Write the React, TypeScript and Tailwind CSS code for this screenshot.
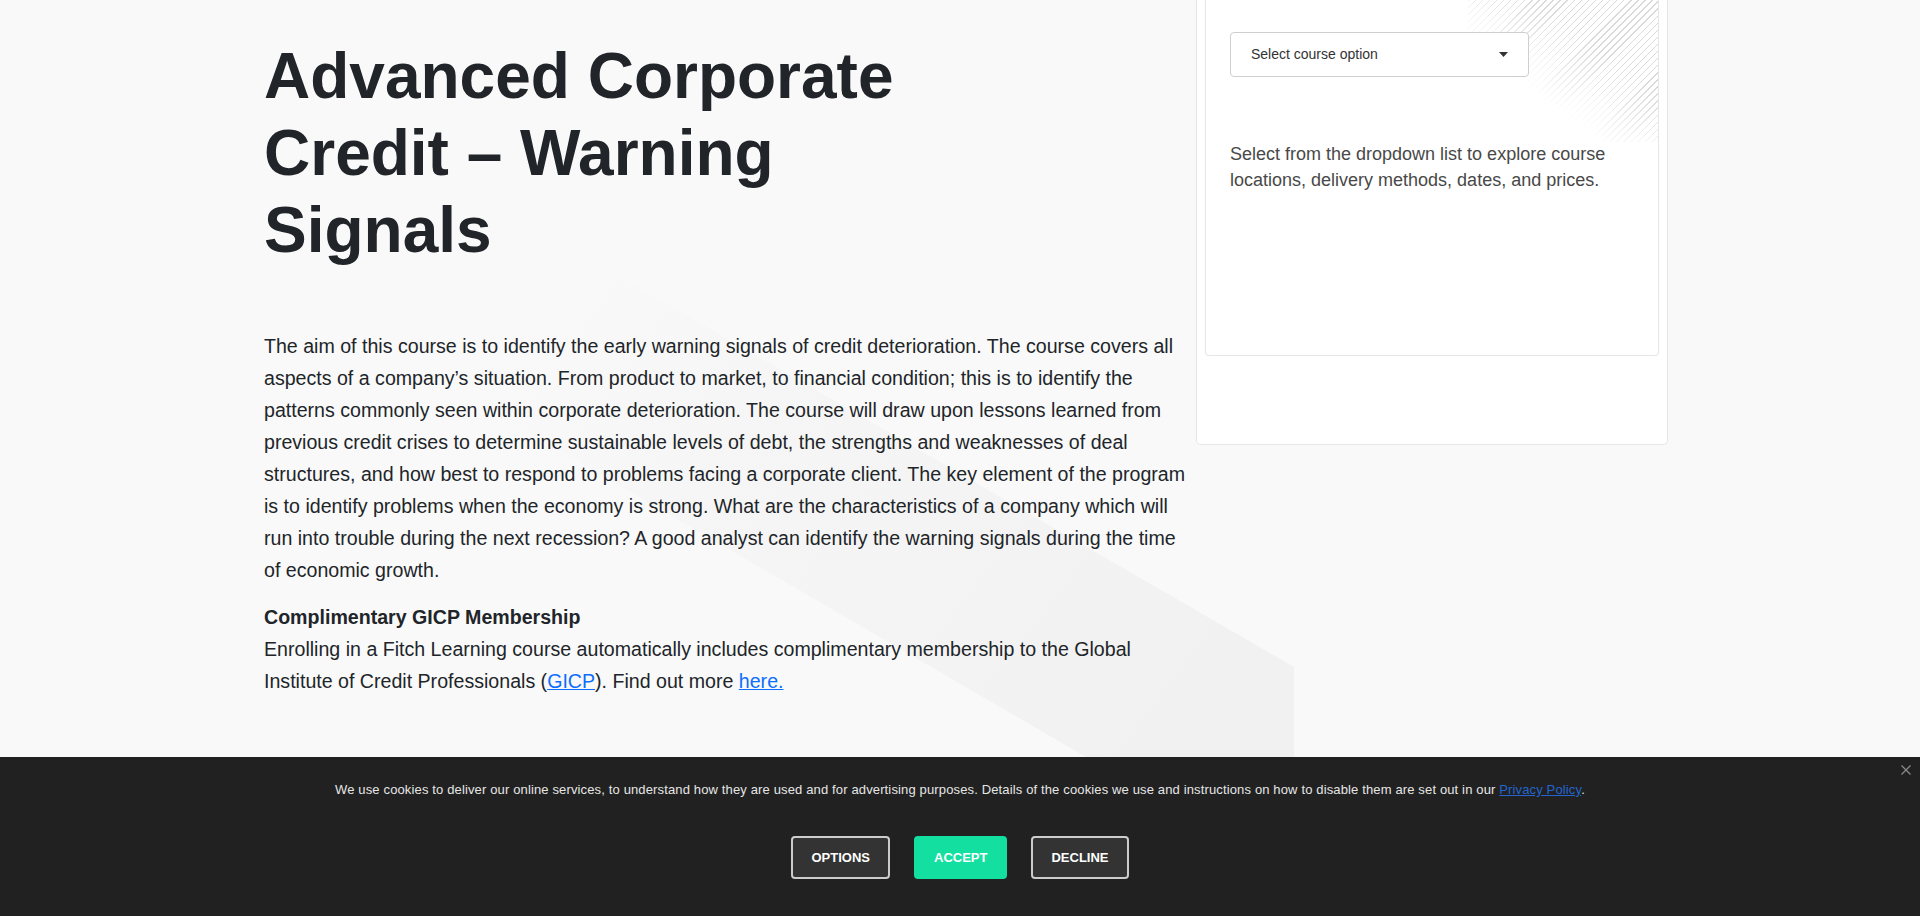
import React from "react";

function BackgroundShape() {
  return (
    <svg
      className="absolute left-0 top-0 pointer-events-none"
      width="1920"
      height="916"
      viewBox="0 0 1920 916"
      aria-hidden="true"
    >
      <defs>
        <linearGradient id="band" x1="0" y1="0" x2="1" y2="0.55">
          <stop offset="0" stopColor="#f9f9f9" stopOpacity="0" />
          <stop offset="0.35" stopColor="#f6f6f6" stopOpacity="1" />
          <stop offset="1" stopColor="#f1f1f1" stopOpacity="1" />
        </linearGradient>
      </defs>
      <polygon points="600,265 1294,667 1294,878 450,387" fill="url(#band)" />
    </svg>
  );
}

function CourseCard() {
  return (
    <div className="w-[472px] h-[445px] bg-white border border-t-0 border-[#e6e6e6] rounded-b-[5px] px-[8px] pb-[88px]">
      <div className="relative h-full bg-white border border-t-0 border-[#e6e6e6] rounded-b-[4px] pl-[24px] pt-[32px] overflow-hidden">
        <div className="absolute right-0 top-0 w-[190px] h-[142px] [background-image:repeating-linear-gradient(135deg,#d9d9d9_0_1px,transparent_1px_5px)] [mask-image:linear-gradient(to_bottom_left,#000_32%,transparent_66%)]" />
        <div className="relative flex items-center justify-between w-[299px] h-[45px] border border-[#cfcfcf] rounded-[4px] bg-white pl-[20px] pr-[20px] text-[14px] text-[#333]">
          <span>Select course option</span>
          <svg width="9" height="5" viewBox="0 0 9 5" aria-hidden="true">
            <polygon points="0,0 9,0 4.5,5" fill="#333" />
          </svg>
        </div>
        <p className="relative mt-[64px] w-[404px] text-[18px] leading-[26px] text-[#484848]">
          Select from the dropdown list to explore course locations, delivery methods, dates, and prices.
        </p>
      </div>
    </div>
  );
}

function CookieBanner() {
  return (
    <div className="fixed left-0 right-0 bottom-0 h-[159px] bg-[#212121] pt-[24px] font-['Liberation_Sans',Arial,sans-serif]">
      <button className="absolute right-[9px] top-[8px] w-[10px] h-[10px]" aria-label="Close">
        <svg width="10" height="10" viewBox="0 0 10 10">
          <line x1="0.5" y1="0.5" x2="9.5" y2="9.5" stroke="#8a8a8a" strokeWidth="1.2" />
          <line x1="9.5" y1="0.5" x2="0.5" y2="9.5" stroke="#8a8a8a" strokeWidth="1.2" />
        </svg>
      </button>
      <p className="text-center text-[13px] tracking-[0.14px] leading-[18px] text-[#e6e6e6]">
        We use cookies to deliver our online services, to understand how they are used and for advertising purposes. Details of the cookies we use and instructions on how to disable them are set out in our{" "}
        <a href="#" className="text-[#2366d1] underline">Privacy Policy</a>.
      </p>
      <div className="mt-[37px] flex justify-center gap-[24px]">
        <button className="h-[43px] px-[18px] border-2 border-[#cccccc] rounded-[4px] bg-[#333333] text-white text-[13px] font-bold">
          OPTIONS
        </button>
        <button className="h-[43px] px-[18px] border-2 border-[#13e0a0] rounded-[4px] bg-[#13e0a0] text-white text-[13px] font-bold">
          ACCEPT
        </button>
        <button className="h-[43px] px-[18px] border-2 border-[#cccccc] rounded-[4px] bg-[#333333] text-white text-[13px] font-bold">
          DECLINE
        </button>
      </div>
    </div>
  );
}

export default function App() {
  return (
    <div className="relative min-h-[916px] h-[916px] bg-[#f9f9f9] overflow-hidden font-['Liberation_Sans',Arial,sans-serif] text-[#212529]">
      <BackgroundShape />
      <div className="relative flex pl-[264px]">
        <div className="w-[924px] pt-[38px]">
          <h1 className="w-[700px] text-[64px] leading-[77px] font-bold text-[#212529]">
            Advanced Corporate Credit – Warning Signals
          </h1>
          <p className="mt-[61px] text-[19.6px] leading-[32px] text-[#212529]">
            The aim of this course is to identify the early warning signals of credit deterioration. The course covers all aspects of a company’s situation. From product to market, to financial condition; this is to identify the patterns commonly seen within corporate deterioration. The course will draw upon lessons learned from previous credit crises to determine sustainable levels of debt, the strengths and weaknesses of deal structures, and how best to respond to problems facing a corporate client. The key element of the program is to identify problems when the economy is strong. What are the characteristics of a company which will run into trouble during the next recession? A good analyst can identify the warning signals during the time of economic growth.
          </p>
          <p className="mt-[15px] text-[19.6px] leading-[32px] text-[#212529]">
            <strong className="font-bold">Complimentary GICP Membership</strong>
            <br />
            Enrolling in a Fitch Learning course automatically includes complimentary membership to the Global Institute of Credit Professionals (<a href="#" className="text-[#0d6efd] underline">GICP</a>). Find out more{" "}
            <a href="#" className="text-[#0d6efd] underline">here.</a>
          </p>
        </div>
        <div className="ml-[8px]">
          <CourseCard />
        </div>
      </div>
      <CookieBanner />
    </div>
  );
}
